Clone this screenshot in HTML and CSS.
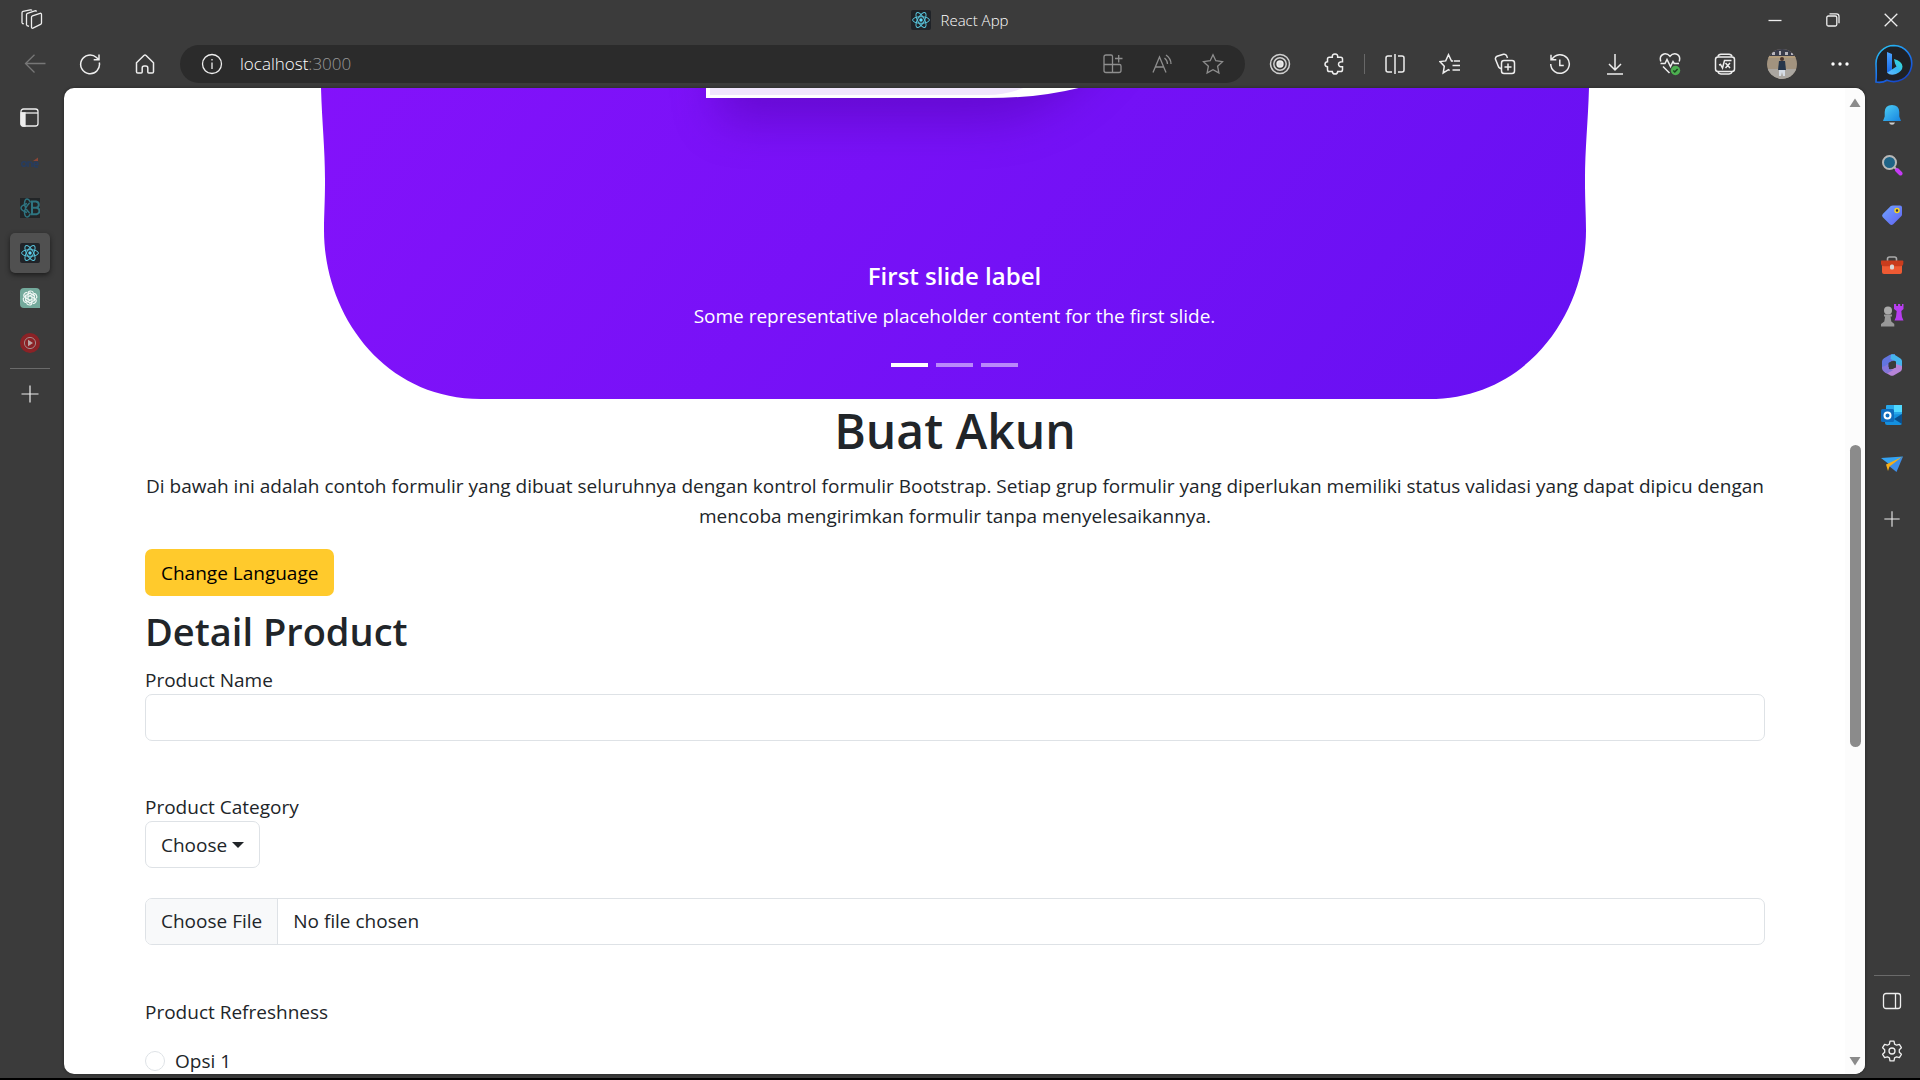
FILE: index.html
```html
<!DOCTYPE html>
<html lang="id">
<head>
<meta charset="utf-8">
<meta name="viewport" content="width=device-width, initial-scale=1">
<title>React App</title>
<link rel="stylesheet" href="styles.css">
</head>
<body>
<svg class="defs" aria-hidden="true">
  <defs>
    <symbol id="react" viewBox="0 0 20 20">
      <rect width="20" height="20" rx="2" fill="#202328"/>
      <g fill="none" stroke="#58c4dc" stroke-width="1">
        <ellipse cx="10" cy="10" rx="8.4" ry="3.3"/>
        <ellipse cx="10" cy="10" rx="8.4" ry="3.3" transform="rotate(60 10 10)"/>
        <ellipse cx="10" cy="10" rx="8.4" ry="3.3" transform="rotate(120 10 10)"/>
      </g>
      <circle cx="10" cy="10" r="1.7" fill="#61dafb"/>
    </symbol>
    <symbol id="plus" viewBox="0 0 20 20"><path d="M10 1.5v17M1.5 10h17" fill="none" stroke="currentColor" stroke-width="1.2"/></symbol>
  </defs>
</svg>
<div class="window">
  <header class="chrome">
    <div class="titlebar">
      <button class="workspace" aria-label="Workspaces">
        <svg class="icon" width="22" height="22" viewBox="0 0 22 22"><path d="M10.5 8.2q0-1 1-1.4l7.500-2.500q1.500-.3 1.500 1.200v8.500q0 1-1 1.400l-7.500 3.800q-1.500.4-1.500-1.200z M5.500 16.300V5.700q0-1 1-1.400l7.300-2.500q1.500-.2 1.700.8M1 14.300V3.700q0-1 1-1.400L9.300.9q1.300-.2 1.700.6M1 14.300l1.800.5M5.500 16.300l2.500 1"/></svg>
      </button>
      <div class="tab-title"><svg width="20" height="20"><use href="#react"/></svg><span>React App</span></div>
      <div class="window-controls">
        <button aria-label="Minimize"><svg class="icon" width="14" height="14" viewBox="0 0 14 14"><path d="M.5 7.500h13"/></svg></button>
        <button aria-label="Restore"><svg class="icon" width="14" height="14" viewBox="0 0 14 14"><rect x=".8" y="3" width="10" height="10" rx="1.500"/><path d="M3.500.8h7q2.500 0 2.500 2.500v7"/></svg></button>
        <button aria-label="Close"><svg class="icon" width="14" height="14" viewBox="0 0 14 14"><path d="M.7.700l12.600 12.600M13.300.7L.7 13.300"/></svg></button>
      </div>
    </div>
    <div class="toolbar">
      <button class="icon-btn dim" aria-label="Back"><svg class="icon" width="22" height="20" viewBox="0 0 22 20"><path d="M21.500 9.500H2M10.500.8L1.500 9.500l9 9"/></svg></button>
      <button class="icon-btn" aria-label="Refresh"><svg class="icon bold" width="22" height="22" viewBox="0 0 22 22"><path d="M20.300 9.500A9.400 9.400 0 1 1 17.500 4.500l2 2M20 1.500v5.200h-5.300"/></svg></button>
      <button class="icon-btn" aria-label="Home"><svg class="icon bold" width="20" height="20" viewBox="0 0 20 20"><path d="M1.500 8.700L8.900 1.500q1.100-.9 2.200 0l7.400 7.200v9q0 1.300-1.300 1.300h-3.400q-1 0-1-1v-4q0-2-2-2h-1.600q-2 0-2 2v4q0 1-1 1H2.800q-1.300 0-1.300-1.300z"/></svg></button>
      <div class="address">
        <svg class="icon" width="22" height="22" viewBox="0 0 22 22"><circle cx="11" cy="11" r="9.500"/><path d="M11 9.500v6.500M11 6v1.600"/></svg>
        <span class="url">localhost<span class="port">:3000</span></span>
        <div class="address-actions">
          <button aria-label="App available"><svg class="icon" width="20" height="20" viewBox="0 0 20 20"><path d="M1 10.500V3q0-2 2-2h5q1.500 0 1.500 1.500v8M1 10v6.500Q1 18.500 3 18.500h13q2 0 2-2V12q0-1.500-1.500-1.500H1M9.500 10.500v8M12 4.500h7.500M15.700 1v7.500"/></svg></button>
          <button aria-label="Read aloud"><svg class="icon" width="22" height="20" viewBox="0 0 22 20"><path d="M1 18.500L7.500 3l6.500 15.500M3.500 13h8M12.500 4q3 2.500 3 6M14 1q5 3.500 5 9"/></svg></button>
          <button aria-label="Favourite"><svg class="icon" width="22" height="22" viewBox="0 0 22 22"><path d="M11 1.700l2.800 6 6.700.9-4.900 4.600 1.300 6.700L11 16.700l-5.900 3.200 1.300-6.700L1.500 8.600l6.700-.9z"/></svg></button>
        </div>
      </div>
      <button class="icon-btn" aria-label="Recorder"><svg class="icon" width="22" height="22" viewBox="0 0 22 22"><g stroke="#cfcfcf" stroke-width="1.500"><circle cx="11" cy="11" r="9.500"/><circle cx="11" cy="11" r="6.200"/></g><circle cx="11" cy="11" r="3" fill="#ddd"/></svg></button>
      <button class="icon-btn" aria-label="Extensions"><svg class="icon bold" width="22" height="22" viewBox="0 0 22 22"><path d="M3.500 6q0-1.800 1.800-1.800h3Q8 1 11 1t2.700 3.200h3q1.800 0 1.800 1.800v2.800Q14.500 8.500 14.500 11.300t4 2.500v3q0 1.800-1.800 1.800h-3Q13.500 21 11 21t-2.700-2.400h-3q-1.800 0-1.800-1.800v-3Q1 13.500 1 11.200t2.500-2.500z"/></svg></button>
      <span class="divider"></span>
      <button class="icon-btn" aria-label="Split screen"><svg class="icon bold" width="22" height="22" viewBox="0 0 22 22"><path d="M8 3H4Q2 3 2 5v12q0 2 2 2h4M14 3h4q2 0 2 2v12q0 2-2 2h-4M11 1v20"/></svg></button>
      <button class="icon-btn" aria-label="Favourites"><svg class="icon bold" width="22" height="22" viewBox="0 0 22 22"><path d="M14.200 8H12.500L9.500 1.700 6.700 7.900 1 8.600l4.300 4.600L4.200 19.900l5.300-3.200 1.200.8M15 8h6M13.500 12.500H21M13.500 17H21"/></svg></button>
      <button class="icon-btn" aria-label="Collections"><svg class="icon bold" width="22" height="22" viewBox="0 0 22 22"><rect x="7.500" y="7.500" width="13" height="13" rx="2.500"/><path d="M14 10.500v7M10.500 14h7M7.500 15.500Q5 15.500 4.300 13.200L1.500 6.300Q1 4.200 3 3.300l6.500-2q2-.5 3 1.200l1 2.500"/></svg></button>
      <button class="icon-btn" aria-label="History"><svg class="icon bold" width="22" height="22" viewBox="0 0 22 22"><path d="M3 6.200A9.300 9.300 0 1 1 1.700 11M2 1.800v5h5.300M10.800 6.500v6h4"/></svg></button>
      <button class="icon-btn" aria-label="Downloads"><svg class="icon bold" width="18" height="22" viewBox="0 0 18 22"><path d="M9 1v15M3 11l6 6 6-6M1 21h16"/></svg></button>
      <button class="icon-btn" aria-label="Browser essentials"><svg class="icon bold" width="22" height="24" viewBox="0 0 22 24"><path d="M1.800 9.500Q0 3.500 5 2q3.500-.7 6 2.300 2.500-3 6-2.300 5 1.500 3.200 7.500M1.500 11.500H6l2-4 3.500 7 2.500-5 1.200 2H20M4 14.500l6.500 6.500"/><circle cx="16.500" cy="18.500" r="4.700" fill="#4caf50" stroke="none"/><path d="M14.300 18.500l1.500 1.500 2.800-3" stroke="#1d4420"/></svg></button>
      <button class="icon-btn" aria-label="Math solver"><svg class="icon bold" width="22" height="22" viewBox="0 0 22 22"><rect x="1.500" y="4" width="19" height="14.500" rx="2.500"/><path d="M4 3.500Q4.500 1.300 7 1.300h8q2.500 0 3 2.200M4 19q.5 1.900 3 1.900h8q2.500 0 3-1.900M5 12l1.500-.5L8.500 15l2-7.500h7M11.500 10l4.500 5M16 10l-4.500 5"/></svg></button>
      <button class="icon-btn avatar-btn" aria-label="Profile">
        <svg width="30" height="30" viewBox="0 0 30 30"><defs><clipPath id="av"><circle cx="15" cy="15" r="15"/></clipPath></defs><g clip-path="url(#av)"><rect width="30" height="30" fill="#a2937f"/><rect width="30" height="7" fill="#3a3c4b"/><path d="M5 3h3v3H5zM12 2h2v4h-2zM18 3h3v3h-3zM24 4h2v2h-2z" fill="#b9b6bd"/><path d="M0 7h30v2H0z" fill="#b39c7b"/><path d="M0 20h30v10H0z" fill="#aaa6a0"/><circle cx="15" cy="10" r="2" fill="#4a332c"/><path d="M12 12h6l1 9h-8z" fill="#26364b"/><path d="M12 21h6v6h-2l-1-4-1 4h-2z" fill="#d5dce5"/></g></svg>
      </button>
      <button class="icon-btn" aria-label="More"><svg width="18" height="4" viewBox="0 0 18 4" fill="#fff"><circle cx="2" cy="2" r="1.700"/><circle cx="9" cy="2" r="1.700"/><circle cx="16" cy="2" r="1.700"/></svg></button>
      <button class="icon-btn bing" aria-label="Bing">
        <svg width="40" height="40" viewBox="0 0 40 40"><defs><linearGradient id="bo" x1="0" y1="0" x2=".6" y2="1"><stop offset="0" stop-color="#2ccdf2"/><stop offset=".6" stop-color="#1a76f0"/><stop offset="1" stop-color="#1646c8"/></linearGradient><linearGradient id="bb" x1="0" y1="0" x2="0" y2="1"><stop offset="0" stop-color="#4ba3ff"/><stop offset="1" stop-color="#1668e8"/></linearGradient><linearGradient id="bc" x1="1" y1="0" x2="0" y2="1"><stop offset="0" stop-color="#35e5c8"/><stop offset=".5" stop-color="#35b6f5"/><stop offset="1" stop-color="#69b8ff"/></linearGradient></defs><path d="M20 1.500a18 18 0 1 1-7 34.700q-5 3-11 1.800Q2.500 31 2 20A18 18 0 0 1 20 1.500z" fill="#1f2126" stroke="url(#bo)" stroke-width="1.600"/><path d="M13 8l5 2v16L13 29z" fill="url(#bb)"/><path d="M20 15q8 2 8.500 7.500 0 4.500-6.500 7.500-5.500 2-9-1.200l9.500-6.300-1.500-3z" fill="url(#bc)"/></svg>
      </button>
    </div>
  </header>

  <nav class="tabs" aria-label="Tabs">
    <button class="tab" aria-label="Tab actions"><svg class="icon" width="20" height="20" viewBox="0 0 20 20"><rect x="1" y="1" width="17" height="17" rx="2.500"/><path d="M1 5h17" /><path d="M1 5h4v13H3q-2 0-2-2z" fill="#eee"/></svg></button>
    <button class="tab" aria-label="One"><svg width="20" height="12" viewBox="0 0 20 12" fill="none" stroke-width="1.600"><circle cx="4" cy="7" r="2.300" stroke="#273c5e"/><path d="M8 10V5h2q2 0 2 2v3M14 7.500h4q0-2.500-2-2.500t-2 2.500 2 2.500h2" stroke="#273c5e"/><path d="M13 4l5-3.500V4z" fill="#8a4636"/></svg></button>
    <button class="tab" aria-label="React Bootstrap"><svg width="20" height="20" viewBox="0 0 20 20"><rect width="20" height="20" fill="#222527"/><g fill="none" stroke="#2e7480" stroke-width="1.500"><path d="M10.500 4.500Q9 1 7 1T4.500 5q0 5 5 10 M10.500 15.500Q9 19 7 19t-2.500-4q0-5 5-10M7 5.500Q1 7.500 1 10t6 4.500"/><path d="M12 3.500h4q2.800.5 2.800 3.200T16 9.700h-4zM12 9.700h4.500q3 .5 3 3.200t-3 3.300H12z" stroke-width="2"/></g></svg></button>
    <button class="tab active" aria-label="React App"><svg width="20" height="20"><use href="#react"/></svg></button>
    <button class="tab" aria-label="ChatGPT"><svg width="20" height="20" viewBox="0 0 20 20"><path d="M4 0h12q4 0 4 4v16H4q-4 0-4-4V4q0-4 4-4z" fill="#74aa9c"/><g fill="none" stroke="#eef6f3" stroke-width="1.200"><path id="k" d="M8 11.200V5.800Q8 3 10.500 3q2 0 3 1.700M8 6.200l2-1.200 5 3"/><use href="#k" transform="rotate(60 10 10)"/><use href="#k" transform="rotate(120 10 10)"/><use href="#k" transform="rotate(180 10 10)"/><use href="#k" transform="rotate(240 10 10)"/><use href="#k" transform="rotate(300 10 10)"/></g></svg></button>
    <button class="tab" aria-label="YouTube Music"><svg width="20" height="20" viewBox="0 0 20 20"><circle cx="10" cy="10" r="10" fill="#8b2226"/><circle cx="10" cy="10" r="5.600" fill="none" stroke="#a38c8c" stroke-width="1"/><path d="M8 6.800v6.400l5-3.200z" fill="#b9a6a6"/></svg></button>
    <hr>
    <button class="tab" aria-label="New tab"><svg width="20" height="20"><use href="#plus"/></svg></button>
  </nav>

  <div class="page">
    <main class="content">
      <section class="carousel">
        <svg class="slide" viewBox="0 0 1268 311" preserveAspectRatio="none" aria-hidden="true">
          <defs>
            <linearGradient id="pg" gradientUnits="userSpaceOnUse" x1="100" y1="-300" x2="1160" y2="520"><stop offset="0" stop-color="#8612fb"/><stop offset="1" stop-color="#6610f2"/></linearGradient>
            <filter id="sh" x="-30%" y="-50%" width="160%" height="300%"><feGaussianBlur stdDeviation="24"/></filter>
            <clipPath id="blob"><path d="M0 0C1 35 4 60 4 92C4 115 3 125 3 142C3 225 62 310 160 310H1108C1206 310 1265 225 1265 142C1265 125 1264 115 1264 92C1264 60 1267 35 1268 0Z"/></clipPath>
          </defs>
          <g clip-path="url(#blob)">
            <rect width="1268" height="311" fill="url(#pg)"/>
            <path d="M398-60H800Q740 32 660 32H398z" fill="#46009a" opacity=".42" filter="url(#sh)"/>
            <path d="M385-20H810Q755 10 667 10H385z" fill="#fff"/>
            <path d="M389-20H740Q700 7 667 7H389z" fill="#f0e6fc"/>
          </g>
        </svg>
        <div class="caption">
          <h5>First slide label</h5>
          <p>Some representative placeholder content for the first slide.</p>
        </div>
        <div class="indicators">
          <button class="on" aria-label="Slide 1"></button><button aria-label="Slide 2"></button><button aria-label="Slide 3"></button>
        </div>
      </section>
      <section class="container">
        <h1>Buat Akun</h1>
        <p class="lead">Di bawah ini adalah contoh formulir yang dibuat seluruhnya dengan kontrol formulir Bootstrap. Setiap grup formulir yang diperlukan memiliki status validasi yang dapat dipicu dengan mencoba mengirimkan formulir tanpa menyelesaikannya.</p>
        <button class="btn-warning">Change Language</button>
        <form>
          <h2>Detail Product</h2>
          <div class="group name-group">
            <label for="name">Product Name</label>
            <input class="control" id="name" type="text">
          </div>
          <div class="group category-group">
            <label for="category">Product Category</label>
            <select class="category" id="category"><option>Choose</option></select>
          </div>
          <input class="control file" type="file" aria-label="Product image">
          <fieldset>
            <legend>Product Refreshness</legend>
            <label class="check"><input type="radio" name="fresh">Opsi 1</label>
          </fieldset>
        </form>
      </section>
    </main>
    <div class="scrollbar" aria-hidden="true">
      <svg width="12" height="10" viewBox="0 0 12 10"><path d="M6 .5L11.500 9h-11z" fill="#8b8b8b"/></svg>
      <div class="track"><span class="before"></span><span class="thumb"></span><span class="after"></span></div>
      <svg width="12" height="10" viewBox="0 0 12 10"><path d="M6 9.500L.5 1h11z" fill="#8b8b8b"/></svg>
    </div>
  </div>

  <aside class="sidebar" aria-label="Sidebar">
    <button aria-label="Notifications"><svg width="20" height="22" viewBox="0 0 20 22"><defs><linearGradient id="s1" x1="0" y1="0" x2="1" y2="1"><stop offset="0" stop-color="#4fd0f5"/><stop offset="1" stop-color="#1583e0"/></linearGradient></defs><path d="M10 1q7 0 7.300 7v4.500L19 17H1l1.700-4.500V8Q3 1 10 1z" fill="url(#s1)"/><path d="M7 18.500h6q-.7 2.300-3 2.300t-3-2.300z" fill="#ccc"/></svg></button>
    <button aria-label="Search"><svg width="22" height="22" viewBox="0 0 22 22"><circle cx="8.500" cy="8.500" r="6.500" fill="#1f6487" stroke="#b8b8b8" stroke-width="2"/><path d="M13 13l2.500 2.500" stroke="#b8b8b8" stroke-width="2"/><path d="M16 16l3.500 3.500" stroke="#c53af5" stroke-width="4" stroke-linecap="round"/></svg></button>
    <button aria-label="Shopping"><svg width="22" height="22" viewBox="0 0 22 22"><defs><linearGradient id="s2" x1="0" y1="0" x2="1" y2="1"><stop offset="0" stop-color="#6fa5ff"/><stop offset="1" stop-color="#6161f1"/></linearGradient></defs><path d="M12 1.500h7q2 0 2 2v7q0 1-.8 1.800l-8 8q-1.700 1.500-3.400 0l-7-7q-1.500-1.500 0-3.200l8-8q.9-.6 2.200-.6z" fill="url(#s2)"/><circle cx="16" cy="6.500" r="2" fill="#334" stroke="#f5d321" stroke-width="1.500"/></svg></button>
    <button aria-label="Tools"><svg width="24" height="20" viewBox="0 0 24 20"><path d="M7.500 6V4q0-2 2-2h5q2 0 2 2v2" fill="none" stroke="#aaa" stroke-width="1.600"/><rect x="2" y="8" width="20" height="11" rx="2" fill="#ee5a33"/><path d="M1.500 5.500h21q.8 0 .8.800v2q0 3-3 3H4q-3 0-3-3v-2q0-.8.500-.8z" fill="#c93c1d"/><rect x="10" y="9.500" width="4" height="5" rx="1.500" fill="#d8d8d8"/></svg></button>
    <button aria-label="Games"><svg width="24" height="24" viewBox="0 0 24 24"><path d="M14 1h2.200v2h1.800V1h2.200v2H22V1h1.500v5L21.300 8l.7 6 1.500 3.500h-9L16 14l.7-6L14 6z" fill="#b73df0"/><circle cx="8" cy="7.500" r="4" fill="#aaa"/><path d="M4 11.500h8v2h-1.500l.8 5 3 2.500v2.500H1V21l3.300-2.500.8-5H4z" fill="#989898"/></svg></button>
    <button aria-label="Microsoft 365"><svg width="22" height="22" viewBox="0 0 22 22"><path d="M9 .8L14 0v6L8 9v5.500L1 14.500v-7Q1 5.500 3 4.300z" fill="#6275df"/><path d="M10 .6Q12-.3 14 .9l5.500 3.500Q21 5.500 21 7v7l-6-3V7.500L9.500 5z" fill="#45b5ee"/><path d="M21 12v2.500q0 2-1.500 3L13 21.200q-2 1-4 0L3 17.700 15 13.500V10z" fill="#b684d8"/><path d="M1 13q4-1 6-3l1 5 4 1.200-6 3.300-3-1.800Q1 16.500 1 14z" fill="#8475d9"/><path d="M11 7l3.800 2v4L11 15.200 7.500 13V9z" fill="#3b3b3b"/></svg></button>
    <button aria-label="Outlook"><svg width="22" height="22" viewBox="0 0 22 22"><rect x="5" y="1" width="16" height="14" rx="1" fill="#28a8ea"/><path d="M13 1h8v7h-8z" fill="#50d9ff"/><path d="M4 11l17-1v9q0 2-2 2H6q-2 0-2-2z" fill="#1490df"/><path d="M21 10v10l-8-5z" fill="#0a4f8c"/><rect x="0" y="5" width="13" height="13" rx="1.500" fill="#0f6cbd"/><circle cx="6.500" cy="11.500" r="3" fill="none" stroke="#fff" stroke-width="2"/></svg></button>
    <button aria-label="Drop"><svg width="22" height="20" viewBox="0 0 22 20"><path d="M0 3l22-1.500-12 9.300z" fill="#35a3f2"/><path d="M22 1.500L15.500 17 8 11z" fill="#3d8ee9"/><path d="M21 2L5 9.500l2 6.500 1.500-4.500z" fill="#f6ae18"/></svg></button>
    <button class="add" aria-label="Customise"><svg width="18" height="18"><use href="#plus"/></svg></button>
    <div class="bottom">
      <hr>
      <button aria-label="Hide sidebar"><svg class="icon" width="20" height="18" viewBox="0 0 20 18"><rect x="1.500" y="1.500" width="17" height="15" rx="2.500"/><path d="M13.500 1.500v15"/></svg></button>
      <button aria-label="Settings"><svg class="icon" width="22" height="22" viewBox="0 0 22 22"><circle cx="11" cy="11" r="3"/><path d="M9 1.200h4l.6 2.900 2 1.100 2.800-.9 2 3.400L18.300 9.800v2.400l2.100 2.100-2 3.400-2.800-.9-2 1.100-.6 2.900H9l-.6-2.900-2-1.100-2.800.9-2-3.400 2.100-2.100V9.800L1.600 7.700l2-3.400 2.800.9 2-1.100z" stroke-linejoin="round"/></svg></button>
    </div>
  </aside>
</div>
</body>
</html>
```
FILE: styles.css
```css
* { box-sizing: border-box; }
body { margin: 0; background: #000; font-family: "Open Sans", "Noto Sans", sans-serif; font-size: 19px; line-height: 30px; color: #212529; }
button, input, select { font: inherit; color: inherit; margin: 0; }
button { border: 0; padding: 0; background: none; display: inline-flex; align-items: center; justify-content: center; }
h1, h2, h5, p { margin: 0; }
hr { border: 0; height: 1px; background: #6a6a6a; margin: 0; }
svg { display: block; flex: none; }
.defs { position: absolute; width: 0; height: 0; }
.icon { fill: none; stroke: currentColor; stroke-width: 1.3; }
.icon.bold { stroke-width: 1.5; }

.window { display: grid; grid-template: 88px minmax(0, 1fr) / 64px minmax(0, 1fr) 55px; height: calc(100vh - 2px); background: #3b3b3b; color: #eee; }
.chrome { grid-column: 1 / -1; }
.titlebar { display: grid; grid-template-columns: 1fr auto 1fr; align-items: center; height: 40px; }
.workspace { justify-self: start; width: 64px; height: 40px; }
.tab-title { display: flex; align-items: center; gap: 9px; font-size: 15px; font-weight: 300; line-height: 20px; color: #fff; }
.window-controls { justify-self: end; display: flex; }
.window-controls button { width: 58px; height: 40px; }
.toolbar { display: flex; align-items: center; height: 48px; padding-left: 7px; }
.icon-btn { width: 55px; height: 40px; flex: none; }
.dim { color: #777; }
.address { flex: 1; display: flex; align-items: center; height: 38px; margin: 0 7px 0 8px; padding: 0 7px 0 21px; border-radius: 19px; background: #2b2b2b; }
.url { margin-left: 17px; font-size: 17px; font-weight: 300; color: #fff; }
.port { color: #9a9a9a; }
.address-actions { display: flex; margin-left: auto; color: #8e8e8e; }
.address-actions button { width: 50px; }
.divider { width: 1px; height: 20px; margin: 0 2px; background: #686868; }
.avatar-btn { width: 60px; }
.bing { width: 53px; }

.tabs { display: flex; flex-direction: column; align-items: center; gap: 5px; padding: 10px 5px 0 0; }
.tab { width: 40px; height: 40px; border-radius: 5px; }
.tab.active { background: #505050; box-shadow: 0 2px 5px #1c1c1c; }
.tabs hr { width: 40px; }

.page { display: flex; min-height: 0; margin-bottom: 4px; border-radius: 10px; overflow: hidden; background: #fff; color: #212529; box-shadow: 0 0 3px #222; }
.content { flex: 1; min-width: 0; overflow: hidden; }
.scrollbar { display: flex; flex-direction: column; align-items: center; width: 20px; padding: 10px 0 8px; background: #fcfcfc; }
.track { flex: 1; display: flex; flex-direction: column; width: 11px; }
.before { flex: 338; }
.thumb { flex: 302; border-radius: 6px; background: #8b8b8b; }
.after { flex: 310; }

.carousel { position: relative; padding: 0 256px 0 257px; }
.slide { width: 100%; height: 312px; }
.caption { position: absolute; inset: auto 0 69px; text-align: center; color: #fff; }
.caption h5 { margin-bottom: 10px; font-size: 24px; font-weight: 600; }
.indicators { position: absolute; inset: auto 0 33px; display: flex; justify-content: center; gap: 8px; }
.indicators button { width: 37px; height: 4px; background: #fff; opacity: .5; }
.indicators .on { opacity: 1; }

.container { padding: 0 80px 0 81px; }
h1 { margin: 1px 0 10px; font-size: 48px; line-height: 60px; font-weight: 600; text-align: center; }
.lead { margin-bottom: 18px; text-align: center; }
.btn-warning { height: 47px; padding: 0 16px; border-radius: 7px; background: #ffca2c; color: #000; }
h2 { margin: 11px 0; font-size: 38px; line-height: 48px; font-weight: 600; }
.group { display: flex; flex-direction: column; align-items: flex-start; }
.group label { line-height: 28px; }
.name-group { margin-bottom: 52px; }
.category-group { margin-bottom: 30px; }
.control { display: block; width: 100%; height: 47px; padding: 8px 15px; border: 1px solid #dee2e6; border-radius: 7px; background: #fff; }
.category { appearance: none; height: 47px; padding: 0 31px 0 15px; border: 1px solid #dee2e6; border-radius: 7px; background: #fff url("data:image/svg+xml,%3Csvg xmlns='http://www.w3.org/2000/svg' width='12' height='6'%3E%3Cpath d='M0 0h12L6 6z' fill='%23212529'/%3E%3C/svg%3E") no-repeat right 15px top 20px; }
.file { padding: 0; overflow: hidden; line-height: 45px; }
.file::file-selector-button { height: 45px; margin: 0 15px 0 0; padding: 0 15px; border: 0; border-right: 1px solid #dee2e6; background: #f8f9fa; font: inherit; color: inherit; }
fieldset { margin: 52px 0 0; padding: 0; border: 0; }
legend { padding: 0; margin-bottom: 19px; }
.check { display: flex; align-items: center; gap: 10px; }
.check input { appearance: none; width: 20px; height: 20px; border: 1px solid #dee2e6; border-radius: 50%; }

.sidebar { display: flex; flex-direction: column; align-items: center; padding: 2px 1px 2px 0; }
.sidebar button { width: 50px; height: 50px; }
.add { margin-top: 4px; }
.bottom { display: flex; flex-direction: column; align-items: center; margin-top: auto; }
.bottom hr { width: 36px; }
```
